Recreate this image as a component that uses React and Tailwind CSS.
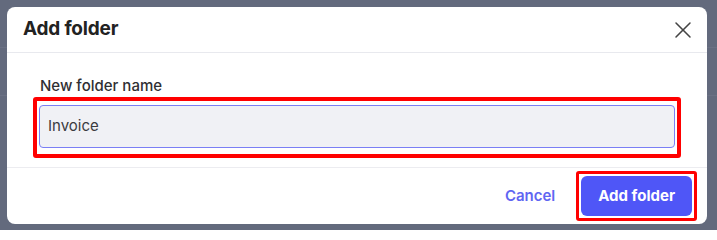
import { X } from 'lucide-react';

export default function App() {
  return (
    <div className="relative w-full h-[230px] overflow-hidden bg-[#636a7d] font-['Inter',sans-serif]">
      {/* dimmed page behind the modal */}
      <div className="flex flex-col">
        <div className="h-12 border-b border-[#6b7184]" />
        <div className="h-12 border-b border-[#6b7184]" />
      </div>

      <div className="absolute left-[7px] top-[7px] w-[700px] h-[217px] rounded-lg bg-white flex flex-col">
        <div className="h-[46px] flex items-center justify-between pl-4 pr-[10px] border-b border-[#e8e9ee]">
          <h2 className="text-[19px] font-bold text-[#222] tracking-[-0.2px]">Add folder</h2>
          <button className="text-[#444] flex items-center justify-center">
            <X size={28} strokeWidth={1.3} />
          </button>
        </div>

        <div className="h-[115px] px-[26px] pt-[23px] border-b border-[#ececf0]">
          <label className="block pl-[7px] text-[15px] font-medium leading-5 text-[#2f2f33]">
            New folder name
          </label>
          <div className="mt-[1px] border-4 border-[#ff0000] rounded-[3px] px-[2px] pt-[4px] pb-[6px]">
            <div className="h-[43px] rounded-[4px] border border-[#7a7ff5] bg-[#f0f1f5] flex items-center pl-2">
              <span className="text-[15px] text-[#3b3b3f]">Invoice</span>
            </div>
          </div>
        </div>

        <div className="flex-1 flex items-center justify-end pr-[10px] gap-[21px]">
          <button className="text-[15px] font-semibold text-[#5f66f2]">Cancel</button>
          <div className="border-[3px] border-[#ff0000] rounded-[3px] p-[2px]">
            <button className="h-10 px-[17px] rounded-md bg-[#4f56f7] text-white text-[15px] font-bold">
              Add folder
            </button>
          </div>
        </div>
      </div>
    </div>
  );
}
